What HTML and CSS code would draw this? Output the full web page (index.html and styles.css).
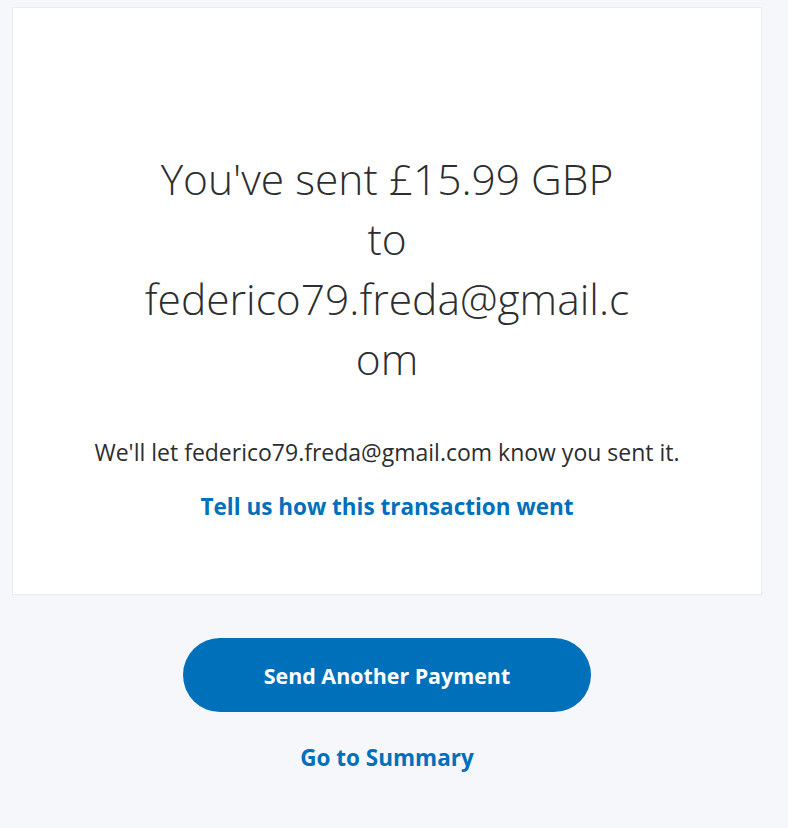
FILE: index.html
```html
<!DOCTYPE html>
<html lang="en">
<head>
<meta charset="utf-8">
<title>Payment sent</title>
<link rel="stylesheet" href="styles.css">
</head>
<body>
<main class="page">
  <section class="card">
    <h1 class="headline">You've sent £15.99 GBP to federico79.freda@gmail.com</h1>
    <p class="note">We'll let federico79.freda@gmail.com know you sent it.</p>
    <a class="feedback" href="#">Tell us how this transaction went</a>
  </section>
  <div class="actions">
    <a class="btn-primary" href="#">Send Another Payment</a>
    <a class="link-summary" href="#">Go to Summary</a>
  </div>
</main>
</body>
</html>
```

FILE: styles.css
```css
html, body {
  margin: 0;
  padding: 0;
  background: #f5f7fa;
  font-family: "Open Sans", "Liberation Sans", sans-serif;
  color: #2c2e2f;
}
.page {
  padding: 7px 0 0 12px;
  width: 750px;
}
.card {
  background: #fff;
  border: 1px solid #eaeced;
  height: 588px;
  box-sizing: border-box;
  display: flex;
  flex-direction: column;
  align-items: center;
  padding-top: 141px;
}
.headline {
  margin: 0;
  width: 492px;
  font-size: 42.5px;
  line-height: 60px;
  font-weight: 300;
  text-align: center;
  overflow-wrap: anywhere;
  color: #2c2e2f;
}
.note {
  margin: 49px 0 0;
  font-size: 23px;
  line-height: 28px;
  text-align: center;
}
.feedback {
  margin-top: 27px;
  font-size: 22.5px;
  line-height: 28px;
  font-weight: 700;
  color: #0070ba;
  text-decoration: none;
}
.actions {
  display: flex;
  flex-direction: column;
  align-items: center;
  padding-top: 43px;
}
.btn-primary {
  width: 408px;
  height: 74px;
  border-radius: 37px;
  background: #0070ba;
  color: #fff;
  font-size: 21.4px;
  font-weight: 700;
  text-decoration: none;
  display: flex;
  align-items: center;
  justify-content: center;
}
.link-summary {
  margin-top: 32px;
  font-size: 22.5px;
  line-height: 28px;
  font-weight: 700;
  color: #0070ba;
  text-decoration: none;
}
```
